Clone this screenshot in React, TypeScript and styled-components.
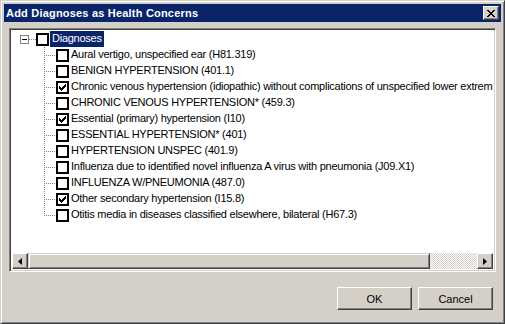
import React from "react";
import styled, { createGlobalStyle } from "styled-components";

const GlobalStyle = createGlobalStyle`
  html, body {
    margin: 0;
    padding: 0;
    background: #d4d0c8;
  }
  body {
    font-family: "Liberation Sans", Arial, sans-serif;
    font-size: 11px;
  }
`;

interface Diagnosis {
  label: string;
  checked?: boolean;
}

const diagnoses: Diagnosis[] = [
  { label: "Aural vertigo, unspecified ear (H81.319)" },
  { label: "BENIGN HYPERTENSION (401.1)" },
  {
    label:
      "Chronic venous hypertension (idiopathic) without complications of unspecified lower extremity (I87.309)",
    checked: true
  },
  { label: "CHRONIC VENOUS HYPERTENSION* (459.3)" },
  { label: "Essential (primary) hypertension (I10)", checked: true },
  { label: "ESSENTIAL HYPERTENSION* (401)" },
  { label: "HYPERTENSION UNSPEC (401.9)" },
  {
    label:
      "Influenza due to identified novel influenza A virus with pneumonia (J09.X1)"
  },
  { label: "INFLUENZA W/PNEUMONIA (487.0)" },
  { label: "Other secondary hypertension (I15.8)", checked: true },
  { label: "Otitis media in diseases classified elsewhere, bilateral (H67.3)" }
];

const Window = styled.div`
  width: 505px;
  height: 324px;
  box-sizing: border-box;
  display: flex;
  flex-direction: column;
  background: #d4d0c8;
  border: 1px solid;
  border-color: #d4d0c8 #404040 #404040 #d4d0c8;
  box-shadow: inset 1px 1px #ffffff, inset -1px -1px #808080;
  padding: 3px;
`;

const TitleBar = styled.div`
  height: 18px;
  flex: none;
  display: flex;
  align-items: center;
  justify-content: space-between;
  background: #0a246a;
  padding: 0 2px;
`;

const Title = styled.span`
  color: #ffffff;
  font-weight: bold;
  font-size: 11px;
  letter-spacing: 0.2px;
`;

const RaisedButton = styled.button`
  box-sizing: border-box;
  background: #d4d0c8;
  border: 1px solid;
  border-color: #ffffff #404040 #404040 #ffffff;
  box-shadow: inset -1px -1px #808080;
  padding: 0;
  margin: 0;
  font-family: "Liberation Sans", Arial, sans-serif;
  color: #000000;
  display: flex;
  align-items: center;
  justify-content: center;
`;

const CloseButton = styled(RaisedButton)`
  width: 16px;
  height: 14px;
`;

const Body = styled.div`
  flex: 1;
  display: flex;
  flex-direction: column;
  padding: 6px 8px 10px 5px;
`;

const TreeBox = styled.div`
  height: 244px;
  margin-right: -3px;
  box-sizing: border-box;
  display: flex;
  flex-direction: column;
  background: #ffffff;
  border: 1px solid;
  border-color: #808080 #ffffff #ffffff #808080;
  box-shadow: inset 1px 1px #404040, inset -1px -1px #d4d0c8;
  padding: 2px;
`;

const TreeArea = styled.div`
  flex: 1;
  overflow: hidden;
  letter-spacing: -0.25px;
`;

const Row = styled.div<{ $indent: number }>`
  height: 16px;
  display: flex;
  align-items: center;
  padding-left: ${(p) => p.$indent}px;
  white-space: nowrap;
`;

const ExpandBox = styled.span`
  width: 9px;
  height: 9px;
  box-sizing: border-box;
  border: 1px solid #808080;
  background: #ffffff;
  display: flex;
  align-items: center;
  justify-content: center;
  flex: none;
  &::after {
    content: "";
    width: 5px;
    height: 1px;
    background: #000000;
  }
`;

const DotH = styled.span<{ $w: number }>`
  width: ${(p) => p.$w}px;
  height: 1px;
  flex: none;
  background-image: repeating-linear-gradient(
    to right,
    #808080 0 1px,
    transparent 1px 2px
  );
`;

const Connector = styled.span<{ $last: boolean }>`
  width: 12px;
  height: 16px;
  flex: none;
  position: relative;
  &::before {
    content: "";
    position: absolute;
    left: 0;
    top: 0;
    width: 1px;
    height: ${(p) => (p.$last ? "9px" : "16px")};
    background-image: repeating-linear-gradient(
      to bottom,
      #808080 0 1px,
      transparent 1px 2px
    );
  }
  &::after {
    content: "";
    position: absolute;
    left: 2px;
    top: 8px;
    width: 9px;
    height: 1px;
    background-image: repeating-linear-gradient(
      to right,
      #808080 0 1px,
      transparent 1px 2px
    );
  }
`;

const CheckBox = styled.span`
  width: 13px;
  height: 13px;
  box-sizing: border-box;
  border: 2px solid #000000;
  background: #ffffff;
  flex: none;
  display: flex;
  align-items: center;
  justify-content: center;
`;

const Label = styled.span<{ $selected?: boolean }>`
  margin-left: ${(p) => (p.$selected ? "1px" : "0")};
  padding: 1px 2px 2px;
  line-height: 13px;
  color: ${(p) => (p.$selected ? "#ffffff" : "#000000")};
  background: ${(p) => (p.$selected ? "#0a246a" : "transparent")};
`;

const HScroll = styled.div`
  height: 16px;
  flex: none;
  display: flex;
`;

const ArrowButton = styled(RaisedButton)`
  width: 16px;
  height: 16px;
  flex: none;
`;

const Thumb = styled.div`
  box-sizing: border-box;
  width: 402px;
  flex: none;
  background: #d4d0c8;
  border: 1px solid;
  border-color: #d4d0c8 #404040 #404040 #d4d0c8;
  box-shadow: inset 1px 1px #ffffff, inset -1px -1px #808080;
`;

const Track = styled.div`
  flex: 1;
  background-color: #ffffff;
  background-image: repeating-conic-gradient(
    #d4d0c8 0 25%,
    #ffffff 0 50%
  );
  background-size: 2px 2px;
`;

const Footer = styled.div`
  margin-top: 15px;
  display: flex;
  justify-content: flex-end;
  gap: 6px;
`;

const DialogButton = styled(RaisedButton)`
  width: 75px;
  height: 23px;
  font-size: 11px;
`;

const Check = () => (
  <svg width="7" height="7" viewBox="0 0 7 7">
    <path d="M0 2h1v1h1v1h1V3h1V2h1V1h1V0h1v3H6v1H5v1H4v1H3v1H2V6H1V5H0z" fill="#000" />
  </svg>
);

const App = () => {
  return (
    <>
      <GlobalStyle />
      <Window>
        <TitleBar>
          <Title>Add Diagnoses as Health Concerns</Title>
          <CloseButton>
            <svg width="8" height="7" viewBox="0 0 8 7">
              <path
                d="M0 0h2v1h1v1h2V1h1V0h2v1H7v1H6v1H5v1h1v1h1v1h1v1H6V6H5V5H3v1H2v1H0V6h1V5h1V4h1V3H2V2H1V1H0z"
                fill="#000"
              />
            </svg>
          </CloseButton>
        </TitleBar>
        <Body>
          <TreeBox>
            <TreeArea>
              <Row $indent={8}>
                <ExpandBox />
                <DotH $w={7} />
                <CheckBox />
                <Label $selected>Diagnoses</Label>
              </Row>
              {diagnoses.map((d, i) => (
                <Row key={d.label} $indent={32}>
                  <Connector $last={i === diagnoses.length - 1} />
                  <CheckBox>{d.checked && <Check />}</CheckBox>
                  <Label>{d.label}</Label>
                </Row>
              ))}
            </TreeArea>
            <HScroll>
              <ArrowButton>
                <svg width="4" height="7" viewBox="0 0 4 7">
                  <path d="M4 0v7L0 3.5z" fill="#000" />
                </svg>
              </ArrowButton>
              <Thumb />
              <Track />
              <ArrowButton>
                <svg width="4" height="7" viewBox="0 0 4 7">
                  <path d="M0 0v7l4-3.5z" fill="#000" />
                </svg>
              </ArrowButton>
            </HScroll>
          </TreeBox>
          <Footer>
            <DialogButton>OK</DialogButton>
            <DialogButton>Cancel</DialogButton>
          </Footer>
        </Body>
      </Window>
    </>
  );
};

export default App;
